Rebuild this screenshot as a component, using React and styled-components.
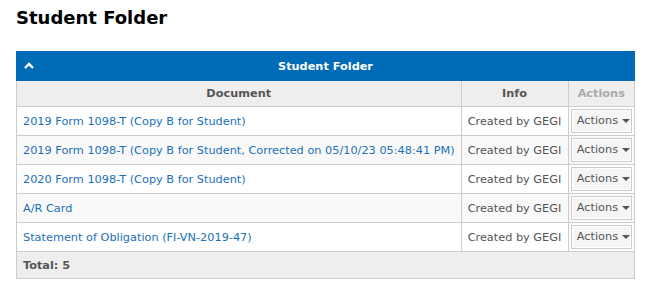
import React from "react";
import styled, { createGlobalStyle } from "styled-components";

const GlobalStyle = createGlobalStyle`
  body {
    margin: 0;
    background: #fff;
    font-family: "DejaVu Sans", Verdana, sans-serif;
  }
`;

const docs = [
  "2019 Form 1098-T (Copy B for Student)",
  "2019 Form 1098-T (Copy B for Student, Corrected on 05/10/23 05:48:41 PM)",
  "2020 Form 1098-T (Copy B for Student)",
  "A/R Card",
  "Statement of Obligation (FI-VN-2019-47)",
];

export default function App() {
  return (
    <>
      <GlobalStyle />
      <Page>
        <Title>Student Folder</Title>
        <Panel>
          <PanelHeader>
            <Toggle>
              <svg width="10" height="7" viewBox="0 0 10 7">
                <path d="M1 6 L5 2 L9 6" fill="none" stroke="#fff" strokeWidth="2.4" />
              </svg>
            </Toggle>
            <PanelTitle>Student Folder</PanelTitle>
          </PanelHeader>
          <Table>
            <colgroup>
              <col />
              <col style={{ width: 107 }} />
              <col style={{ width: 66 }} />
            </colgroup>
            <thead>
              <tr>
                <Th>Document</Th>
                <Th>Info</Th>
                <Th muted>Actions</Th>
              </tr>
            </thead>
            <tbody>
              {docs.map((d, i) => (
                <Row key={d} striped={i % 2 === 1}>
                  <Td>
                    <DocLink href="#">{d}</DocLink>
                  </Td>
                  <Td info>Created by GEGI</Td>
                  <ActionCell>
                    <ActionButton>
                      Actions <Caret />
                    </ActionButton>
                  </ActionCell>
                </Row>
              ))}
            </tbody>
            <tfoot>
              <tr>
                <Foot colSpan={3}>Total: 5</Foot>
              </tr>
            </tfoot>
          </Table>
        </Panel>
      </Page>
    </>
  );
}

const Page = styled.div`
  padding: 0 32px 0 16px;
  width: 619px;
`;

const Title = styled.h1`
  margin: 0;
  padding-top: 7px;
  height: 51px;
  box-sizing: border-box;
  font-size: 18px;
  font-weight: bold;
  color: #000;
`;

const Panel = styled.div`
  border: 1px solid #ccc;
  border-top: none;
`;

const PanelHeader = styled.div`
  position: relative;
  display: flex;
  align-items: center;
  justify-content: center;
  height: 30px;
  margin: 0 -1px;
  background: #006bb6;
`;

const Toggle = styled.span`
  position: absolute;
  left: 8px;
  top: 11px;
  display: flex;
`;

const PanelTitle = styled.span`
  color: #fff;
  font-size: 11.3px;
  font-weight: bold;
`;

const Table = styled.table`
  width: 100%;
  border-collapse: collapse;
  table-layout: fixed;
  font-size: 11.3px;
`;

const Th = styled.th`
  height: 25px;
  padding: 0 6px;
  background: #eee;
  color: ${(p) => (p.muted ? "#aaa" : "#555")};
  font-weight: bold;
  text-align: center;
  border-left: 1px solid #ccc;
  border-bottom: 1px solid #ccc;
  &:first-child {
    border-left: none;
  }
`;

const Row = styled.tr`
  background: ${(p) => (p.striped ? "#f9f9f9" : "#fff")};
`;

const Td = styled.td`
  height: 28px;
  padding: 0 6px;
  color: #555;
  text-align: ${(p) => (p.info ? "center" : "left")};
  border-left: 1px solid #ccc;
  border-bottom: 1px solid #ccc;
  white-space: nowrap;
  &:first-child {
    border-left: none;
  }
`;

const ActionCell = styled(Td)`
  padding: 0 2px;
  text-align: center;
`;

const DocLink = styled.a`
  color: #1a70b8;
  text-decoration: none;
`;

const ActionButton = styled.button`
  display: inline-flex;
  align-items: center;
  gap: 4px;
  height: 24px;
  width: 61px;
  padding: 0 4px 2px 5px;
  border: 1px solid #ccc;
  box-shadow: inset 0 0 0 1px #fff;
  background: #f5f5f5;
  color: #555;
  font-family: "DejaVu Sans", Verdana, sans-serif;
  font-size: 11.3px;
`;

const Caret = styled.span`
  width: 0;
  height: 0;
  margin-top: 2px;
  border-left: 4px solid transparent;
  border-right: 4px solid transparent;
  border-top: 4px solid #555;
`;

const Foot = styled.td`
  height: 26px;
  padding: 0 6px;
  background: #eee;
  color: #555;
  font-weight: bold;
`;
